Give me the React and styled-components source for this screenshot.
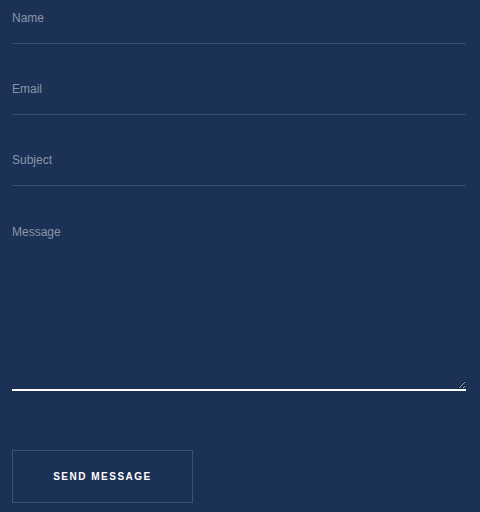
import React from "react"
import styled, {createGlobalStyle} from "styled-components"

const Global = createGlobalStyle`
	html, body {
		margin: 0;
		background: #1c3156;
		font-family: "Liberation Sans", Arial, sans-serif;
	}
`

const App = () => {
	return (
		<>
			<Global/>
			<Form onSubmit={e => e.preventDefault()}>
				<Input type="text" placeholder="Name"/>
				<Input type="email" placeholder="Email"/>
				<Input type="text" placeholder="Subject"/>
				<TextArea placeholder="Message" autoFocus/>
				<Button type="submit">Send Message</Button>
			</Form>
		</>
	)
}

export default App

const Form = styled.form`
	display: flex;
	flex-direction: column;
	padding: 0 14px 0 12px;
`
const field = `
	box-sizing: border-box;
	width: 100%;
	background: transparent;
	border: none;
	border-bottom: 1px solid #3a4e70;
	color: #fff;
	font-family: "Liberation Sans", Arial, sans-serif;
	font-size: 12px;
	outline: none;
	padding: 0;
	&::placeholder {
		color: #8b95a7;
	}
	&:focus {
		border-bottom: 2px solid #fff;
	}
`
const Input = styled.input`
	${field};
	height: 44px;
	padding-bottom: 8px;
	margin-bottom: 27px;
`
const TextArea = styled.textarea`
	${field};
	display: block;
	height: 179px;
	padding-top: 12px;
	line-height: 16px;
	resize: vertical;
	margin-top: -1px;
`
const Button = styled.button`
	box-sizing: border-box;
	width: 181px;
	height: 53px;
	margin-top: 59px;
	background: transparent;
	border: 1px solid #3d5174;
	color: #fff;
	font-family: "Liberation Sans", Arial, sans-serif;
	font-size: 10px;
	font-weight: 700;
	letter-spacing: 1.5px;
	text-transform: uppercase;
	cursor: pointer;
`
